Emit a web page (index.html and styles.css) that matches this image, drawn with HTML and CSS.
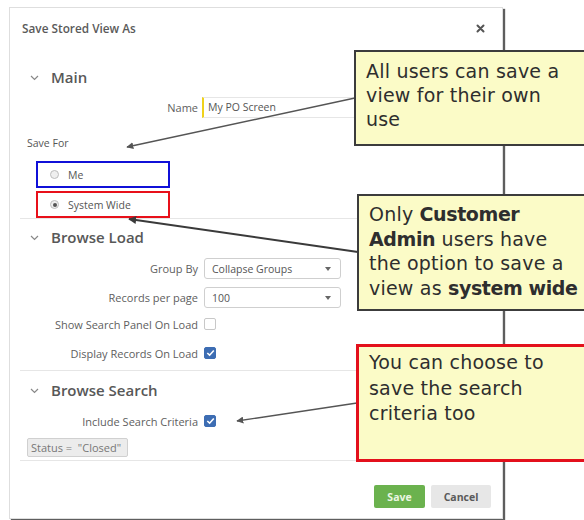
FILE: index.html
```html
<!DOCTYPE html>
<html lang="en">
<head>
<meta charset="utf-8">
<title>Save Stored View As</title>
<link rel="stylesheet" href="styles.css">
</head>
<body>
<div class="page">
  <div class="dialog">
    <div class="dialog-header">
      <span class="dialog-title">Save Stored View As</span>
      <svg class="close" width="9" height="9" viewBox="0 0 9 9"><path d="M1.5 1.5 L7.5 7.5 M7.5 1.5 L1.5 7.5" stroke="#555" stroke-width="2" stroke-linecap="round"/></svg>
    </div>

    <section class="section section-main">
      <h2 class="section-title">
        <svg class="chevron" width="9" height="6" viewBox="0 0 9 6"><path d="M1 1 L4.5 4.5 L8 1" fill="none" stroke="#888" stroke-width="1.2"/></svg>
        Main
      </h2>
      <div class="field">
        <span class="field-label">Name</span>
        <div class="text-input">My PO Screen</div>
      </div>
      <div class="save-for">Save For</div>
      <div class="radio-option mark-blue"><span class="radio"></span>Me</div>
      <div class="radio-option mark-red"><span class="radio checked"></span>System Wide</div>
    </section>

    <section class="section section-load">
      <h2 class="section-title">
        <svg class="chevron" width="9" height="6" viewBox="0 0 9 6"><path d="M1 1 L4.5 4.5 L8 1" fill="none" stroke="#888" stroke-width="1.2"/></svg>
        Browse Load
      </h2>
      <div class="fields">
        <div class="field">
          <span class="field-label">Group By</span>
          <div class="select"><span>Collapse Groups</span><span class="caret"></span></div>
        </div>
        <div class="field">
          <span class="field-label">Records per page</span>
          <div class="select"><span>100</span><span class="caret"></span></div>
        </div>
        <div class="field check">
          <span class="field-label">Show Search Panel On Load</span>
          <span class="checkbox"></span>
        </div>
        <div class="field check">
          <span class="field-label">Display Records On Load</span>
          <span class="checkbox checked"><svg width="9" height="8" viewBox="0 0 9 8"><path d="M1.3 4 L3.6 6.2 L7.8 1.5" fill="none" stroke="#fff" stroke-width="1.6"/></svg></span>
        </div>
      </div>
    </section>

    <section class="section section-search">
      <h2 class="section-title">
        <svg class="chevron" width="9" height="6" viewBox="0 0 9 6"><path d="M1 1 L4.5 4.5 L8 1" fill="none" stroke="#888" stroke-width="1.2"/></svg>
        Browse Search
      </h2>
      <div class="field check">
        <span class="field-label">Include Search Criteria</span>
        <span class="checkbox checked"><svg width="9" height="8" viewBox="0 0 9 8"><path d="M1.3 4 L3.6 6.2 L7.8 1.5" fill="none" stroke="#fff" stroke-width="1.6"/></svg></span>
      </div>
      <div class="criteria-chip">Status = &nbsp;"Closed"</div>
    </section>

    <div class="dialog-footer">
      <button class="btn btn-save">Save</button>
      <button class="btn btn-cancel">Cancel</button>
    </div>
  </div>

  <!-- pointer lines from the notes to the fields -->
  <svg class="pointers" width="584" height="520" viewBox="0 0 584 520">
    <defs>
      <marker id="head" viewBox="0 0 10 10" refX="9" refY="5" markerWidth="5" markerHeight="5" orient="auto-start-reverse">
        <path d="M0 0 L10 5 L0 10 z" fill="#555"/>
      </marker>
      <marker id="head-dark" viewBox="0 0 10 10" refX="9" refY="5" markerWidth="4" markerHeight="4" orient="auto-start-reverse">
        <path d="M0 0 L10 5 L0 10 z" fill="#3a3a3a"/>
      </marker>
    </defs>
    <line x1="355" y1="98" x2="127" y2="147" stroke="#555" stroke-width="1.4" marker-end="url(#head)"/>
    <line x1="358" y1="252" x2="129" y2="219" stroke="#3a3a3a" stroke-width="2" marker-end="url(#head-dark)"/>
    <line x1="357" y1="403" x2="237" y2="421" stroke="#555" stroke-width="1.4" marker-end="url(#head)"/>
  </svg>

  <div class="note note-users">All users can save a<br>view for their own<br>use</div>
  <div class="note note-admin">Only <b>Customer</b><br><b>Admin</b> users have<br>the option to save a<br>view as <b>system wide</b></div>
  <div class="note note-search">You can choose to<br>save the search<br>criteria too</div>
</div>
</body>
</html>
```

FILE: styles.css
```css
html, body {
  margin: 0;
  padding: 0;
  background: #fff;
}

.page {
  position: relative;
  width: 584px;
  height: 520px;
  overflow: hidden;
  font-family: "Open Sans", "Noto Sans", sans-serif;
  color: #555;
}

/* ---------- dialog ---------- */
.dialog {
  margin: 7px 0 0 9px;
  width: 492px;
  height: 510px;
  border: 1px solid #dedede;
  background: #fff;
  box-shadow: 2px 2px 1px rgba(40, 40, 40, 0.75);
  display: flex;
  flex-direction: column;
}

.dialog-header {
  height: 38px;
  padding: 12px 17px 0 12px;
  box-sizing: border-box;
  display: flex;
  justify-content: space-between;
  align-items: flex-start;
}

.dialog-title {
  font-size: 11.8px;
  font-weight: 600;
  line-height: 16px;
  color: #5a5a5a;
}

.close {
  margin-top: 4px;
}

.section {
  margin: 0 10px;
  padding-left: 9px;
  border-bottom: 1px solid #e6e6e6;
}

.section-title {
  margin: 0;
  height: 20px;
  display: flex;
  align-items: center;
  gap: 12px;
  font-size: 15px;
  font-weight: 600;
  color: #585858;
  padding-left: 1px;
}

.chevron {
  margin-top: 1px;
}

.section-main {
  padding-top: 21px;
}

.section-load {
  padding-top: 8px;
  padding-bottom: 9px;
}

.section-search {
  padding-top: 9px;
  padding-bottom: 3px;
}

/* ---------- form rows ---------- */
.field {
  display: flex;
  align-items: center;
  height: 21px;
  margin-left: -9px;
}

.field-label {
  width: 178px;
  text-align: right;
  font-size: 11px;
  color: #5e5e5e;
  margin-right: 6px;
  white-space: nowrap;
}

.section-main .field {
  margin-top: 10px;
}

.text-input {
  margin-left: -2px;
  width: 280px;
  height: 21px;
  box-sizing: border-box;
  border: 1px solid #e6e6e6;
  border-left: 2px solid #f0d21a;
  padding-left: 4px;
  font-size: 10.5px;
  line-height: 19px;
  color: #555;
}

.save-for {
  margin: 18px 0 0 -2px;
  font-size: 10.5px;
  line-height: 14px;
  color: #555;
}

.radio-option {
  margin-left: 7px;
  width: 134px;
  height: 27px;
  box-sizing: border-box;
  display: flex;
  align-items: center;
  padding-left: 12px;
  font-size: 10.5px;
  color: #555;
}

.mark-blue {
  margin-top: 11px;
  border: 2px solid #1010d8;
}

.mark-red {
  margin-top: 3px;
  border: 2px solid #e8101a;
}

.radio {
  width: 9px;
  height: 9px;
  box-sizing: border-box;
  border: 1px solid #bdbdbd;
  border-radius: 50%;
  background: #efefef;
  margin-right: 9px;
  position: relative;
}

.radio.checked::after {
  content: "";
  position: absolute;
  left: 1.5px;
  top: 1.5px;
  width: 4px;
  height: 4px;
  border-radius: 50%;
  background: #555;
}

.fields {
  margin-top: 11px;
  display: flex;
  flex-direction: column;
}

.fields .field + .field {
  margin-top: 8px;
}

.fields .field.check {
  height: 16px;
}

.fields .field.check + .field.check {
  margin-top: 13px;
}

.select {
  width: 137px;
  height: 21px;
  box-sizing: border-box;
  border: 1px solid #cfcfcf;
  border-radius: 3px;
  display: flex;
  align-items: center;
  justify-content: space-between;
  padding: 0 9px 0 7px;
  font-size: 10.5px;
  color: #555;
}

.caret {
  width: 0;
  height: 0;
  border-left: 3px solid transparent;
  border-right: 3px solid transparent;
  border-top: 4px solid #666;
}

.checkbox {
  width: 12px;
  height: 12px;
  box-sizing: border-box;
  border: 1px solid #c8c8c8;
  border-radius: 2px;
  background: #fff;
  display: flex;
  align-items: center;
  justify-content: center;
}

.checkbox.checked {
  background: #3d6db3;
  border-color: #3d6db3;
}

.section-search .field {
  height: 16px;
  margin-top: 13px;
}

.criteria-chip {
  margin: 9px 0 0 -2px;
  width: 101px;
  height: 19px;
  box-sizing: border-box;
  border: 1px solid #d0d0d0;
  border-radius: 2px;
  background: #ececec;
  font-size: 11px;
  line-height: 17px;
  padding-left: 3px;
  color: #777;
  white-space: nowrap;
}

/* ---------- footer ---------- */
.dialog-footer {
  display: flex;
  justify-content: flex-end;
  gap: 6px;
  padding: 24px 11px 0 0;
}

.btn {
  height: 23px;
  border: none;
  border-radius: 2px;
  font-family: "Open Sans", "Noto Sans", sans-serif;
  font-size: 10.5px;
  font-weight: 700;
  padding: 0;
}

.btn-save {
  width: 51px;
  background: #6bb24e;
  color: #eaf6e2;
}

.btn-cancel {
  width: 60px;
  background: #e7e7e7;
  color: #5a5a5a;
}

/* ---------- annotation layer ---------- */
.pointers {
  position: absolute;
  left: 0;
  top: 0;
  pointer-events: none;
}

.note {
  position: absolute;
  left: 354px;
  width: 240px;
  box-sizing: border-box;
  background: #fbfbc7;
  border: 2px solid #3c3c3c;
  padding: 7px 0 0 10px;
  font-family: "DejaVu Sans", sans-serif;
  font-size: 19px;
  line-height: 24.5px;
  color: #2e2e2e;
  white-space: nowrap;
  letter-spacing: 0.2px;
}

.note b {
  font-weight: 700;
  letter-spacing: -0.4px;
}

.note-users {
  top: 50px;
  height: 96px;
  line-height: 24px;
}

.note-admin {
  left: 357px;
  top: 194px;
  height: 117px;
  padding-top: 6px;
}

.note-search {
  left: 356px;
  top: 344px;
  height: 118px;
  border: 3px solid #e3101c;
  padding-top: 3px;
  line-height: 25.5px;
}
```
